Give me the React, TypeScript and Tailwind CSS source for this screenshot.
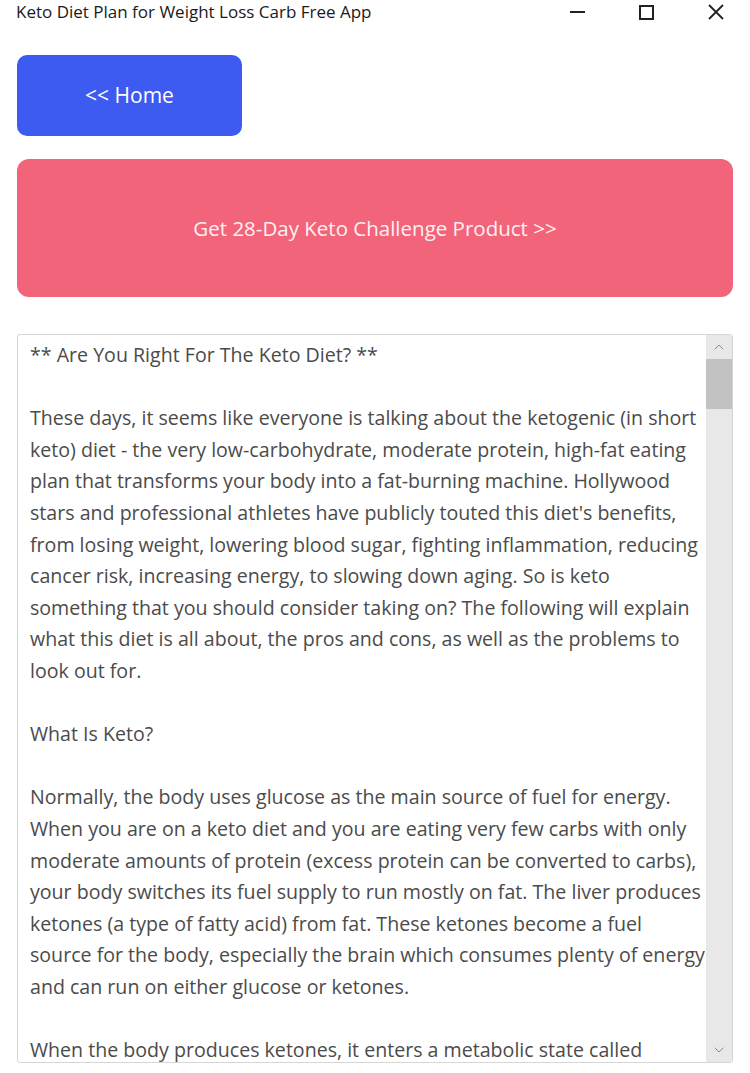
import { ChevronDown, ChevronUp } from "lucide-react";

const lines: string[] = [
  "** Are You Right For The Keto Diet? **",
  "",
  "These days, it seems like everyone is talking about the ketogenic (in short",
  "keto) diet - the very low-carbohydrate, moderate protein, high-fat eating",
  "plan that transforms your body into a fat-burning machine. Hollywood",
  "stars and professional athletes have publicly touted this diet's benefits,",
  "from losing weight, lowering blood sugar, fighting inflammation, reducing",
  "cancer risk, increasing energy, to slowing down aging. So is keto",
  "something that you should consider taking on? The following will explain",
  "what this diet is all about, the pros and cons, as well as the problems to",
  "look out for.",
  "",
  "What Is Keto?",
  "",
  "Normally, the body uses glucose as the main source of fuel for energy.",
  "When you are on a keto diet and you are eating very few carbs with only",
  "moderate amounts of protein (excess protein can be converted to carbs),",
  "your body switches its fuel supply to run mostly on fat. The liver produces",
  "ketones (a type of fatty acid) from fat. These ketones become a fuel",
  "source for the body, especially the brain which consumes plenty of energy",
  "and can run on either glucose or ketones.",
  "",
  "When the body produces ketones, it enters a metabolic state called",
];

function TitleBar() {
  return (
    <div className="flex h-[24px] items-center justify-between pl-4">
      <span className="text-[17px] text-[#1a1a1a]">Keto Diet Plan for Weight Loss Carb Free App</span>
      <div className="flex h-full items-center">
        <div className="flex w-[69px] justify-center">
          <div className="h-[2px] w-[15px] bg-[#222]" />
        </div>
        <div className="flex w-[69px] justify-center">
          <div className="h-[15px] w-[15px] border-2 border-[#222]" />
        </div>
        <div className="flex w-[69px] justify-center">
          <svg width="18" height="18" viewBox="0 0 18 18" className="text-[#222]">
            <path d="M2 2 L16 16 M16 2 L2 16" stroke="currentColor" strokeWidth="1.8" />
          </svg>
        </div>
      </div>
    </div>
  );
}

export default function App() {
  return (
    <div className="h-[1073px] w-[750px] overflow-hidden bg-white font-['Open_Sans',sans-serif]">
      <TitleBar />
      <div className="flex flex-col px-[17px] pt-[31px]">
        <button
          type="button"
          className="flex h-[81px] w-[225px] items-center justify-center rounded-[10px] bg-[#3d5af1] text-[21px] text-white"
        >
          &lt;&lt; Home
        </button>
        <button
          type="button"
          className="mt-[23px] flex h-[138px] w-full items-center justify-center rounded-[12px] bg-[#f2647a] text-[20.5px] text-[#fdf0f2]"
        >
          Get 28-Day Keto Challenge Product &gt;&gt;
        </button>
        <div className="mt-[37px] flex h-[729px] rounded-[3px] border border-[#d6d6d6] bg-white">
          <div className="min-w-0 flex-1 overflow-x-clip pl-[12px] pt-[4px]">
            {lines.map((line, i) => (
              <div key={i} className="h-[31.6px] whitespace-nowrap text-[19.6px] leading-[31.6px] text-[#4b4b4b]">
                {line || "\u00a0"}
              </div>
            ))}
          </div>
          <div className="flex w-[26px] flex-col bg-[#e8e8e8]">
            <div className="flex h-[24px] items-center justify-center text-[#8a8a8a]">
              <ChevronUp size={16} strokeWidth={1.5} />
            </div>
            <div className="h-[50px] bg-[#c2c2c2]" />
            <div className="flex-1" />
            <div className="flex h-[24px] items-center justify-center text-[#8a8a8a]">
              <ChevronDown size={16} strokeWidth={1.5} />
            </div>
          </div>
        </div>
      </div>
    </div>
  );
}
